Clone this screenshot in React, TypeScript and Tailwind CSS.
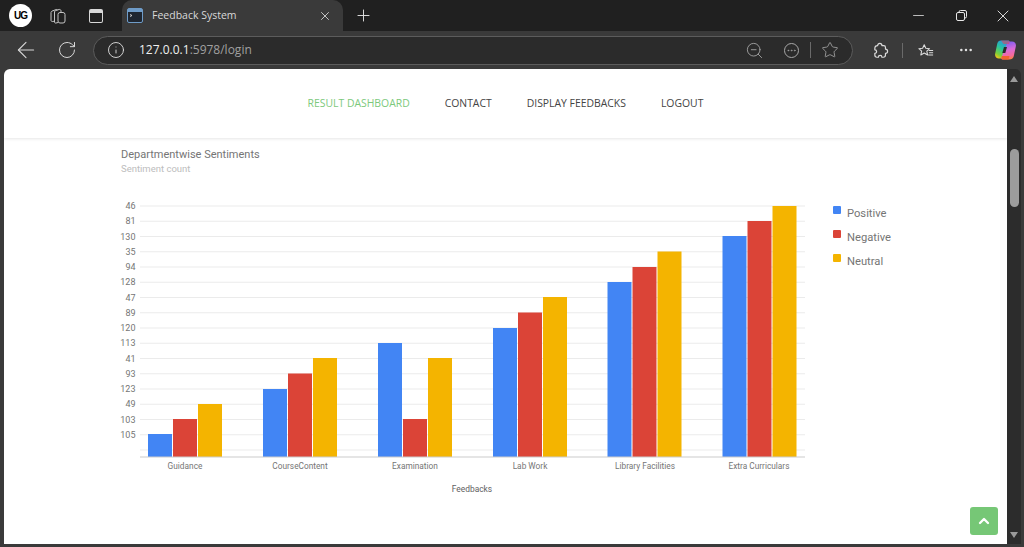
import { ArrowLeft, RotateCw, Info, ZoomOut, Star, X, Plus, Minus, ChevronUp, Ellipsis } from "lucide-react";

const ticks = ["46", "81", "130", "35", "94", "128", "47", "89", "120", "113", "41", "93", "123", "49", "103", "105"];
const top = 206;
const step = 15.25;
const base = 457;
const groups = [
  { name: "Guidance", cx: 185, x: [148, 173, 198], y: [434, 419, 404] },
  { name: "CourseContent", cx: 300, x: [263, 288, 313], y: [389, 373.5, 358] },
  { name: "Examination", cx: 415, x: [378, 403, 428], y: [343, 419, 358] },
  { name: "Lab Work", cx: 530, x: [493, 518, 543], y: [328, 312.5, 297] },
  { name: "Library Facilities", cx: 645, x: [607.5, 632.5, 657.5], y: [282, 267, 251.5] },
  { name: "Extra Curriculars", cx: 759, x: [722.5, 747.5, 772.5], y: [236, 221, 206] },
];
const colors = ["#4285f4", "#db4437", "#f4b400"];
const legend = ["Positive", "Negative", "Neutral"];

function Chart() {
  return (
    <svg width="900" height="320" viewBox="100 180 900 320" className="block ml-[96px] mt-[4px]" style={{ fontFamily: "Roboto, sans-serif" }}>
      {ticks.map((t, i) => {
        const y = top + i * step;
        return (
          <g key={i}>
            <line x1="140" x2="805" y1={y} y2={y} stroke="#ebebeb" strokeWidth="1" />
            <text x="135.5" y={y + 3.2} textAnchor="end" fontSize="9" fill="#757575">{t}</text>
          </g>
        );
      })}
      <line x1="140" x2="805" y1={top + 16 * step} y2={top + 16 * step} stroke="#ebebeb" strokeWidth="1" />
      {groups.map((g) => (
        <g key={g.name}>
          {g.x.map((x, i) => (
            <rect key={i} x={x} y={g.y[i]} width="24" height={base - g.y[i]} fill={colors[i]} />
          ))}
          <text x={g.cx} y="469" textAnchor="middle" fontSize="8.3" fill="#757575">{g.name}</text>
        </g>
      ))}
      <line x1="140" x2="805" y1={base} y2={base} stroke="#cccccc" strokeWidth="1.2" />
      <text x="472" y="492" textAnchor="middle" fontSize="8.4" fill="#616161">Feedbacks</text>
      {legend.map((l, i) => (
        <g key={l}>
          <rect x="833" y={206 + i * 24} width="8" height="8" rx="1" fill={colors[i]} />
          <text x="847" y={216.5 + i * 24.3} fontSize="11.2" fill="#757575">{l}</text>
        </g>
      ))}
    </svg>
  );
}

function Copilot() {
  return (
    <svg width="21" height="20" viewBox="0 0 21 20">
      <defs>
        <linearGradient id="cA" x1="0.7" y1="0" x2="0.2" y2="1">
          <stop offset="0" stopColor="#2a8fe8" />
          <stop offset="0.45" stopColor="#28c4a0" />
          <stop offset="0.8" stopColor="#7ccf3a" />
          <stop offset="1" stopColor="#f5c518" />
        </linearGradient>
        <linearGradient id="cB" x1="0.4" y1="0" x2="0.6" y2="1">
          <stop offset="0" stopColor="#7a5cf0" />
          <stop offset="0.45" stopColor="#d86ad8" />
          <stop offset="0.8" stopColor="#f56a9a" />
          <stop offset="1" stopColor="#f5803a" />
        </linearGradient>
      </defs>
      <path d="M6 0.500h7c1.500 0 2 1 1.500 2.200L9 16.500c-.5 1.300-1.500 2-2.800 2H4c-2.700 0-4.500-2.200-3.800-5L2.300 3.500C2.800 1.500 4 .5 6 .5z" fill="url(#cA)" />
      <path d="M14.500 19.500H8c-1.500 0-2-1-1.500-2.200L12 3.500c.5-1.300 1.500-2 2.800-2H17c2.700 0 4.500 2.200 3.800 5L18.700 16.500c-.5 2-2.200 3-4.200 3z" fill="url(#cB)" />
      <path d="M7 16h7.500l-1 3.500H8c-1.500 0-2-1-1.500-2.200z" fill="#f0622f" />
      <path d="M6 .5h7c1.500 0 1.800 1 1.500 2L14 4H8.500z" fill="#e8454f" opacity="0.55" />
      <path d="M9 7h3l-1.700 6h-3z" fill="#2a2a2a" />
    </svg>
  );
}

export default function App() {
  return (
    <div className="flex flex-col h-[547px] w-[1024px] overflow-hidden bg-[#3a3a3a]" style={{ fontFamily: "'Open Sans', sans-serif" }}>
      {/* title bar */}
      <div className="flex h-[31px] items-center bg-[#202020] text-[#d0d0d0]">
        <div className="ml-[9px] flex h-[23px] w-[23px] items-center justify-center rounded-full bg-white text-[10px] font-bold leading-none tracking-[-1px] text-black" style={{ fontFamily: "'Liberation Sans', sans-serif" }}>UG</div>
        <div className="ml-[18px] h-[16px] w-[16px]">
          <svg width="16" height="16" viewBox="0 0 16 16" fill="none" stroke="#c4c4c4" strokeWidth="1">
            <path d="M4.500 13 3 13.500C2 13.800 1 13.200 1 12.500V4.500C1 3.800 1.500 3.300 2 3.100L6 1.600C6.500 1.400 7 1.500 7.500 1.800" />
            <path d="M8 14.500 6 15C5 15.200 4.500 14.800 4.500 14V4C4.500 3.300 5 2.800 5.600 2.600L9 1.500C10 1.200 11 1.800 11 3V4.500" />
            <rect x="8" y="4.500" width="7" height="10.500" rx="2" />
          </svg>
        </div>
        <div className="ml-[23px] h-[14px] w-[14px] rounded-[2px] border-[1.5px] border-t-[4px] border-[#d8d8d8]" />
        <div className="ml-[19px] flex h-[31px] w-[221px] items-center self-end rounded-t-[10px] bg-[#3a3a3a] pl-[5px] pr-[11px]">
          <svg width="16" height="15" viewBox="0 0 16 15" className="mr-[9px]">
            <rect x="0.500" y="0.500" width="15" height="14" rx="1.500" fill="#1f2630" stroke="#6f9cc8" />
            <rect x="1" y="1" width="14" height="3" fill="#6f9cc8" />
            <path d="M3 6.500 5 7.500 3 8.500" stroke="#e8e8e8" fill="none" strokeWidth="0.8" />
          </svg>
          <span className="flex-1 text-[10.500px] leading-none text-[#d8d8d8]">Feedback System</span>
          <X size={14} strokeWidth={1.500} color="#d8d8d8" />
        </div>
        <Plus size={19} strokeWidth={1.200} color="#e0e0e0" className="ml-[10.500px]" />
        <div className="flex-1" />
        <div className="flex items-center gap-[26px] pr-[11px]">
          <Minus size={17} strokeWidth={1.100} color="#e8e8e8" className="mr-[3px]" />
          <svg width="11" height="11" viewBox="0 0 11 11" fill="none" stroke="#e8e8e8" strokeWidth="1">
            <rect x="0.500" y="2.500" width="8" height="8" rx="1.500" />
            <path d="M3 2.200V2a1.500 1.500 0 0 1 1.500-1.500h4.500A1.500 1.500 0 0 1 10.500 2v4.500A1.500 1.500 0 0 1 8.800 8" />
          </svg>
          <X size={20} strokeWidth={1.100} color="#e8e8e8" />
        </div>
      </div>
      {/* toolbar */}
      <div className="flex h-[38px] items-center text-[#d8d8d8]">
        <ArrowLeft size={26} strokeWidth={1} className="ml-[13px]" />
        <RotateCw size={20} strokeWidth={1.200} className="ml-[18px]" />
        <div className="ml-[16px] flex h-[29px] w-[760px] items-center rounded-full border border-[#5c5c5c] bg-[#2b2b2b] pl-[13px] pr-[13px]">
          <Info size={18} strokeWidth={1.200} color="#e0e0e0" />
          <span className="ml-[14px] flex-1 text-[12px] leading-none">
            <span className="text-[#f0f0f0]">127.0.0.1</span>
            <span className="text-[#a0a0a0]">:5978/login</span>
          </span>
          <ZoomOut size={19} strokeWidth={1.100} color="#a8a8a8" />
          <div className="ml-[20px] flex h-[15px] w-[15px] items-center justify-center rounded-full border border-[#a8a8a8]">
            <Ellipsis size={11} strokeWidth={1.500} color="#a8a8a8" />
          </div>
          <div className="ml-[11px] h-[16px] w-px bg-[#6a6a6a]" />
          <Star size={18} strokeWidth={1.100} color="#a8a8a8" className="ml-[10px]" />
        </div>
        <svg width="17" height="17" viewBox="0 0 24 24" fill="none" stroke="#dcdcdc" strokeWidth="1.700" strokeLinejoin="round" className="ml-[19px]">
          <path d="M8 5a3 3 0 0 1 3-3 3 3 0 0 1 3 3h2.500A2.500 2.500 0 0 1 19 7.500V10a3 3 0 0 1 3 3 3 3 0 0 1-3 3v2.500a3 3 0 0 1-3 3h-2a2.500 2.500 0 0 0-5 0H7a3 3 0 0 1-3-3V16a2.500 2.500 0 0 0 0-5V9a4 4 0 0 1 4-4z" />
        </svg>
        <div className="ml-[13px] h-[15px] w-px bg-[#6a6a6a]" />
        <svg width="16" height="15" viewBox="0 0 18 16" fill="none" stroke="#dcdcdc" strokeWidth="1.200" strokeLinejoin="round" className="ml-[15px]">
          <path d="M7 1.500 8.800 5.500l4.200.5-3.100 2.800.9 4.200L7 10.900 3.200 13l.9-4.200L1 6l4.200-.5z" />
          <path d="M12 8h5M12.500 10.500H17M11.500 13H17" />
        </svg>
        <Ellipsis size={16} strokeWidth={1.800} color="#e0e0e0" className="ml-[24px]" />
        <div className="ml-[21px]"><Copilot /></div>
      </div>
      {/* page + scrollbar */}
      <div className="flex h-[475px] pl-[4px]">
        <div className="relative w-[1003px] overflow-hidden rounded-tl-[6px] bg-white">
          <nav className="flex h-[69px] items-center justify-center gap-[35px] text-[10.400px] uppercase text-[#444444] shadow-[0_1px_3px_rgba(0,0,0,0.1)]">
            <a className="text-[#7cc97c]">Result Dashboard</a>
            <a>Contact</a>
            <a>Display Feedbacks</a>
            <a>Logout</a>
          </nav>
          <div className="pl-[117px] pt-[9px]" style={{ fontFamily: "Roboto, sans-serif" }}>
            <div className="text-[11px] leading-[16px] text-[#757575]">Departmentwise Sentiments</div>
            <div className="-mt-[1px] text-[9.500px] leading-[14px] text-[#bdbdbd]">Sentiment count</div>
          </div>
          <Chart />
          <button className="absolute left-[966px] top-[438px] flex h-[28px] w-[28px] items-center justify-center rounded-[3px] bg-[#76c776]">
            <ChevronUp size={16} strokeWidth={3.500} color="#ffffff" />
          </button>
        </div>
        <div className="flex w-[14px] flex-col items-center rounded-tr-[6px] bg-[#2c2c2c] pt-[7px] pb-[6px]">
          <div className="h-0 w-0 border-x-[4.500px] border-b-[6px] border-x-transparent border-b-[#9a9a9a]" />
          <div className="mt-[67px] h-[58px] w-[9px] rounded-full bg-[#9c9c9c]" />
          <div className="flex-1" />
          <div className="h-0 w-0 border-x-[4.500px] border-t-[6px] border-x-transparent border-t-[#9a9a9a]" />
        </div>
      </div>
    </div>
  );
}
